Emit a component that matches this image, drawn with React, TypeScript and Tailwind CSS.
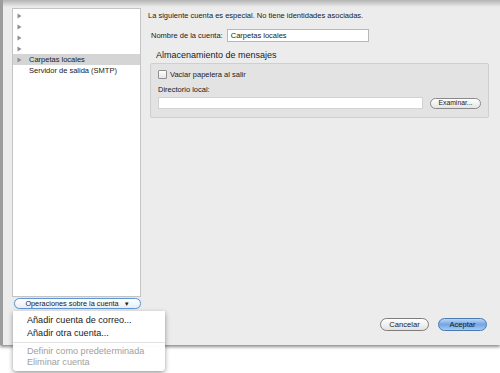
import React from "react";

function Triangle() {
  return (
    <svg width="5" height="6" viewBox="0 0 5 6" className="shrink-0">
      <path d="M0.5 0.5 L4.5 3 L0.5 5.5 Z" fill="#8e8e8e" />
    </svg>
  );
}

const rows = [
  { label: "", tri: true },
  { label: "", tri: true },
  { label: "", tri: true },
  { label: "", tri: true },
  { label: "Carpetas locales", tri: true, selected: true },
  { label: "Servidor de salida (SMTP)", tri: false },
];

export default function App() {
  return (
    <div className="relative w-[500px] h-[373px] bg-white overflow-hidden font-['Liberation_Sans',Arial,sans-serif] text-[#1a1a1a]">
      <div className="relative flex h-[345px] bg-[#ececec] border-l-[3px] border-[#9c9c9c] shadow-[0_2px_3px_rgba(0,0,0,0.45)]">
        <div className="pointer-events-none absolute inset-x-0 top-0 h-[7px] bg-gradient-to-b from-[#b4b4b4] to-[#ececec]" />

        {/* left column */}
        <div className="flex flex-col pl-[9px] pt-[8px]">
          <div className="w-[129px] h-[289px] bg-white border border-[#c4c4c4] pt-[1px]">
            {rows.map((r, i) => (
              <div
                key={i}
                className={`flex items-center h-[11px] pl-[4px] gap-[7px] text-[7.5px] ${
                  r.selected ? "bg-[#d5d5d5]" : ""
                }`}
              >
                {r.tri ? <Triangle /> : <span className="w-[5px]" />}
                <span>{r.label}</span>
              </div>
            ))}
          </div>
          <button
            type="button"
            className="mt-[1px] ml-[2px] w-[127px] h-[11px] flex items-center justify-center gap-[5px] rounded-full border border-[#5f97d6] bg-gradient-to-b from-white to-[#e9eef5] text-[7.3px] leading-none shadow-[0_0_1px_#8db6e6]"
          >
            <span>Operaciones sobre la cuenta</span>
            <span className="text-[6px]">▼</span>
          </button>
        </div>

        {/* right column */}
        <div className="flex flex-col flex-1 pl-[7px] pr-[9px] pt-[11px]">
          <div className="text-[7.5px] leading-[9px]">
            La siguiente cuenta es especial. No tiene identidades asociadas.
          </div>
          <div className="flex items-center mt-[9px] pl-[3px] gap-[4px] text-[7.5px]">
            <span>Nombre de la cuenta:</span>
            <div className="w-[142px] h-[13px] bg-white border border-[#b8b8b8] flex items-center pl-[3px]">
              Carpetas locales
            </div>
          </div>
          <div className="mt-[8px] pl-[8px] text-[9px] leading-[11px]">
            Almacenamiento de mensajes
          </div>
          <div className="mt-[2px] mx-[2px] h-[55px] bg-[#e3e3e3] border border-[#cfcfcf] rounded-[2px] px-[7px] pt-[5px] text-[7.5px]">
            <div className="flex items-center gap-[3px]">
              <span className="w-[9px] h-[9px] bg-gradient-to-b from-white to-[#e6e6e6] border border-[#8f8f8f] rounded-[1px]" />
              <span>Vaciar papelera al salir</span>
            </div>
            <div className="mt-[5px] leading-[9px]">Directorio local:</div>
            <div className="flex items-center mt-[3px] gap-[7px]">
              <div className="w-[265px] h-[12px] bg-white border border-[#d2d2d2]" />
              <button
                type="button"
                className="w-[51px] h-[11px] rounded-full border border-[#8a8a8a] bg-gradient-to-b from-white to-[#e4e4e4] text-[6.8px] leading-none flex items-center justify-center"
              >
                Examinar...
              </button>
            </div>
          </div>

          <div className="flex justify-end gap-[9px] mt-auto mb-[14px] pr-[4px]">
            <button
              type="button"
              className="w-[49px] h-[13px] rounded-full border border-[#7d7d7d] bg-gradient-to-b from-white to-[#e2e2e2] text-[7.6px] leading-none flex items-center justify-center"
            >
              Cancelar
            </button>
            <button
              type="button"
              className="w-[49px] h-[13px] rounded-full border border-[#4a78b0] bg-gradient-to-b from-[#bcd6f4] via-[#73a6e3] to-[#a5cbf2] text-[7.6px] leading-none flex items-center justify-center"
            >
              Aceptar
            </button>
          </div>
        </div>
      </div>

      {/* popup menu */}
      <div className="absolute left-[13px] top-[311px] w-[152px] h-[60px] bg-white/[0.97] rounded-b-[4px] shadow-[0_2px_5px_rgba(0,0,0,0.4)] pt-[3px] text-[9.1px] leading-[12.5px]">
        <div className="pl-[14px]">Añadir cuenta de correo...</div>
        <div className="pl-[14px]">Añadir otra cuenta...</div>
        <div className="my-[3px] h-px bg-[#e2e2e2]" />
        <div className="pl-[14px] text-[#a0a0a0] leading-[11px]">Definir como predeterminada</div>
        <div className="pl-[14px] text-[#a0a0a0] leading-[11px]">Eliminar cuenta</div>
      </div>
    </div>
  );
}
